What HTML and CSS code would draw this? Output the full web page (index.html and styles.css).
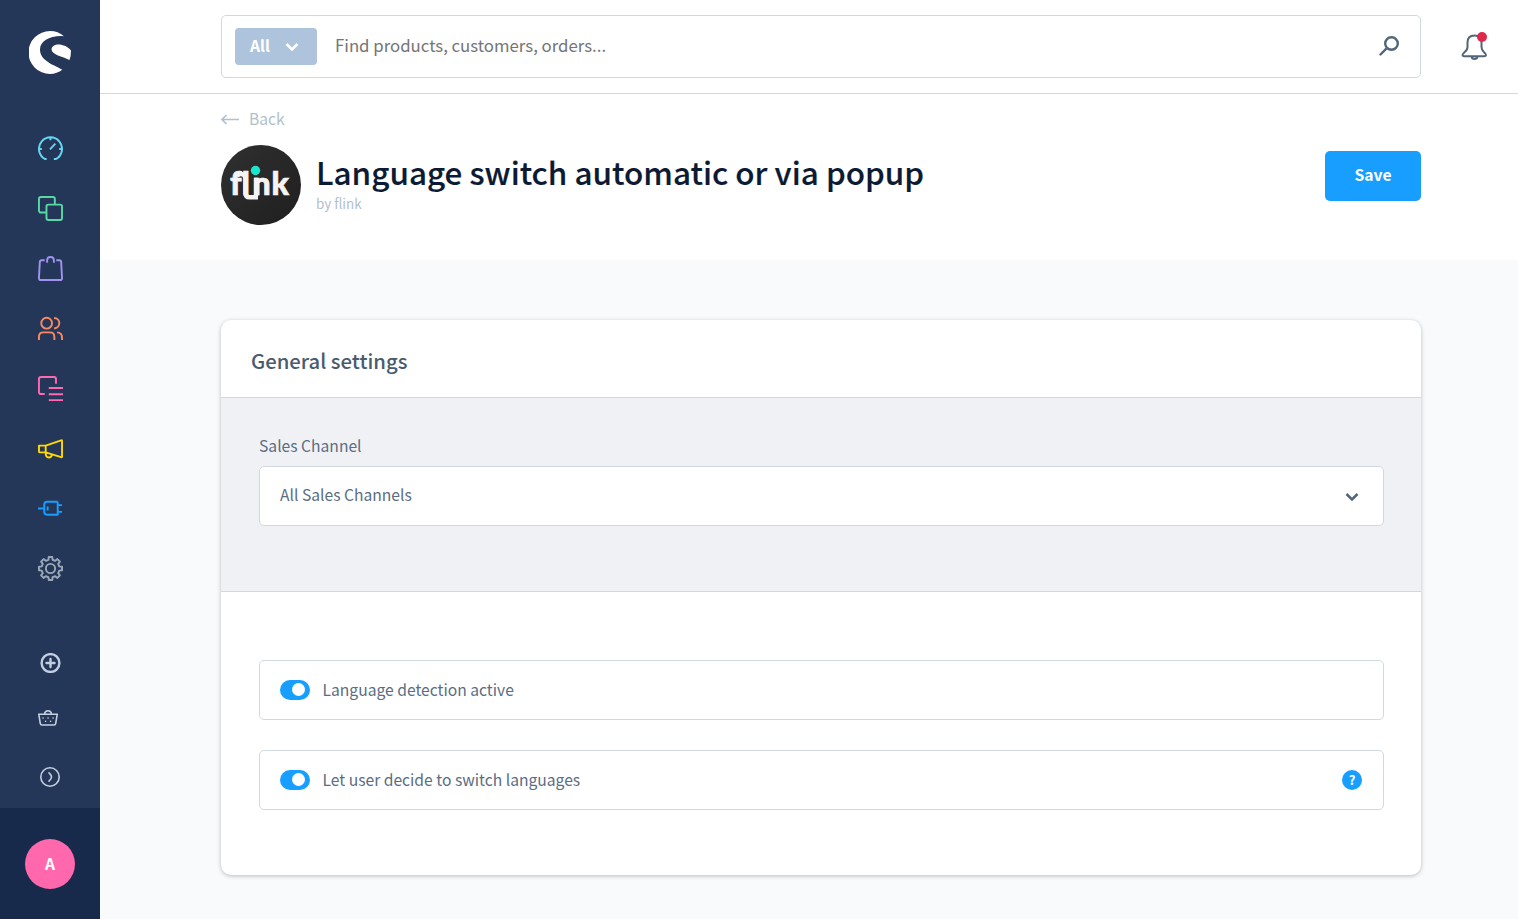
FILE: index.html
```html
<!DOCTYPE html>
<html lang="en">
<head>
  <meta charset="UTF-8">
  <title>Language switch automatic or via popup</title>
  <link rel="stylesheet" href="styles.css">
</head>
<body>

<aside class="sidebar">
  <div class="brand">
    <svg width="42" height="43" viewBox="0 0 42 43"><path fill="#fff" d="M35 5.200C31 1.700 26.500 0 21 0A21.400 21.400 0 0 0 21 43C25.500 43 30 41.500 33.300 38.800C27 34.500 11 30.500 11 18.500C11 10 21 4.300 35 5.200Z"/><path fill="#fff" d="M40.500 29C35 26 23 24 22.500 18.500C23 11 37 12.500 42 19.500Q42 25 40.500 29Z"/></svg>
  </div>
  <nav class="menu">
    <a class="cyan"><svg viewBox="0 0 26 26"><path d="M9 24H7.500A12 12 0 1 1 18.500 24H16.500M13 1.500V4.500M1.500 13.500H4M22 13.500H24.500M12.500 14L18 8"/></svg></a>
    <a class="green"><svg viewBox="0 0 26 26"><rect x="8.800" y="9" width="16.200" height="16" rx="2"/><path d="M8.500 17.200H3A2 2 0 0 1 1 15.200V3A2 2 0 0 1 3 1H15.500A2 2 0 0 1 17.500 3V8.500"/></svg></a>
    <a class="purple"><svg viewBox="0 0 26 26"><path d="M7 4.500H3.800Q2 4.500 1.900 6.300L1 22.800Q.9 25 3 25H23Q25.100 25 25 22.800L24.100 6.300Q24 4.500 22.200 4.500H19M9.500 7V4.500Q9.500 1 13 1T16.500 4.500V7"/></svg></a>
    <a class="orange"><svg viewBox="0 0 26 26"><circle cx="9" cy="7.500" r="5.600"/><path d="M1 25V21.500Q1 17 5.700 17H12.300Q17 17 17 21.500V25M16.700 2C24 2.200 24 12.500 16.700 13M19.800 17Q25 17.200 25 22.500V25"/></svg></a>
    <a class="pink"><svg viewBox="0 0 26 26"><path d="M7 18.800H3.200Q1 18.800 1 16.600V3Q1 1 3.200 1H16.500Q18.700 1 18.700 3V8M11.200 12.500H26M11.200 19H26M11.200 25.300H26"/></svg></a>
    <a class="yellow"><svg viewBox="0 0 26 26"><path d="M1 10H8V17H2Q1 17 1 16ZM8 10L24 4.500Q25 4.300 25 5.200V21.500Q25 22.400 24 22L8 17M8 17Q7.800 22.300 11.300 22.300Q14 22.300 14.500 19.500"/></svg></a>
    <a class="blue"><svg viewBox="0 0 26 26"><path d="M0 13H6.500M20.500 6V19.500H9.500Q6.500 19.500 6.500 16.500V9Q6.500 6 9.500 6H20.500M20.500 9.500H25M20.500 16.500H25M10 11V15"/></svg></a>
    <a class="gray"><svg viewBox="0 0 26 26"><circle cx="13" cy="13" r="4.800"/><path d="M10.800 3.900L11.200 1H14.800L15.200 3.900L17.900 5L20.200 3.200L22.800 5.800L21 8.100L22.100 10.800L25 11.200V14.800L22.100 15.200L21 17.900L22.800 20.200L20.200 22.800L17.900 21L15.200 22.100L14.800 25H11.200L10.800 22.100L8.100 21L5.800 22.800L3.200 20.200L5 17.900L3.900 15.200L1 14.800V11.200L3.900 10.800L5 8.100L3.200 5.800L5.800 3.200L8.100 5Z"/></svg></a>
  </nav>
  <div class="actions">
    <svg width="21" height="20" viewBox="0 0 21 20"><circle cx="10.500" cy="10" r="8.900" stroke-width="2.400"/><path stroke-width="2.400" d="M10.500 6V14M6.500 10H14.500"/></svg>
    <svg class="basket" width="20" height="17" viewBox="0 0 20 17"><path d="M.8 4.300H19.200L17.700 13.500Q17.500 15 16 15H4Q2.500 15 2.300 13.500ZM6.500 4Q7 .8 10 .8T13.500 4"/><path d="M5 8H5.100M10 8H10.100M15 8H15.100M7.500 11.300H7.600M12.500 11.300H12.600"/></svg>
    <svg width="20" height="20" viewBox="0 0 20 20"><circle cx="10" cy="10" r="9.200"/><path d="M9 5.800Q11.500 8 11.500 10T9 14.200"/></svg>
  </div>
  <div class="user"><span class="avatar">A</span></div>
</aside>

<div class="page">
  <header class="topbar">
    <div class="search">
      <button class="search-type"><span>All</span>
        <svg width="14" height="9" viewBox="0 0 14 9"><path d="M1.500 2L7 7.500L12.500 2"/></svg>
      </button>
      <span class="search-text">Find products, customers, orders...</span>
      <svg class="loupe" width="20" height="20" viewBox="0 0 20 20"><circle cx="12.500" cy="7.500" r="6.300"/><path d="M7.800 12.200L1.500 18.500"/></svg>
    </div>
    <div class="bell">
      <svg width="26" height="26" viewBox="0 0 26 26"><path d="M13.500 1.500Q6.500 1.500 6.500 8.500V13Q6.500 16 3.500 18.300Q1 20.500 1.700 21.500Q2.100 22.300 3.500 22.300H22.500Q24.400 22.300 24.800 21.500Q25.500 20.500 23 18.300Q20.500 16 20.500 13V8.500Q20.500 1.500 13.500 1.500ZM10.500 22.500Q11 25 13.500 25T16.500 22.500"/></svg>
      <span class="bell-dot"></span>
    </div>
  </header>

  <section class="head">
    <a class="back">
      <svg width="19" height="11" viewBox="0 0 19 11"><path d="M18 5.500H1M5.500 1L1 5.500L5.500 10"/></svg>
      <span>Back</span>
    </a>
    <div class="head-row">
      <div class="logo">
        <svg width="80" height="80" viewBox="0 0 80 80">
          <text class="logo-text" y="49.500" x="9 20.800 31.500 31.500 50.500">flınk</text>
          <path d="M16 31.500Q17 29 20 29T24.500 32.500V48Q24.500 52.300 28.500 52.300H37" stroke="#f4f4f4" stroke-width="4.500"/>
          <circle cx="34.500" cy="25.500" r="4.700" fill="#19e6cc"/>
        </svg>
      </div>
      <div class="titles">
        <h1>Language switch automatic or via popup</h1>
        <p>by flink</p>
      </div>
      <button class="save">Save</button>
    </div>
  </section>

  <main class="content">
    <div class="card">
      <h2>General settings</h2>
      <div class="channel">
        <label>Sales Channel</label>
        <div class="select">
          <span>All Sales Channels</span>
          <svg width="14" height="9" viewBox="0 0 14 9"><path d="M1.500 2L7 7.500L12.500 2"/></svg>
        </div>
      </div>
      <div class="options">
        <div class="option"><span class="switch"></span><span>Language detection active</span></div>
        <div class="option"><span class="switch"></span><span>Let user decide to switch languages</span><span class="help">?</span></div>
      </div>
    </div>
  </main>
</div>

</body>
</html>
```
FILE: styles.css
```css
* { box-sizing: border-box; }
body { margin: 0; display: flex; height: 919px; overflow: hidden; background: #f9fafc; color: #5a6d82; font: 15.65px/22px "Noto Sans CJK SC", "Noto Sans", sans-serif; }
h1, h2, p { margin: 0; }
button { border: 0; font: inherit; color: #fff; }
svg { display: block; flex: none; fill: none; }

/* sidebar */
.sidebar { width: 100px; height: 919px; background: #243758; display: flex; flex-direction: column; }
.brand { height: 119px; padding: 31px 0 0 29px; }
.menu { display: flex; flex-direction: column; }
.menu a { height: 60px; padding: 17px 0 0 38px; stroke: currentColor; }
.menu svg { width: 25px; height: 25px; stroke-width: 2; stroke-linejoin: round; }
.cyan { color: #65d5f0; }
.green { color: #57d9a3; }
.purple { color: #a092f0; }
.orange { color: #f88962; }
.pink { color: #ff68b4; }
.yellow { color: #ffd700; }
.blue { color: #189eff; }
.gray { color: #9aa8b5; }
.actions { display: flex; flex-direction: column; align-items: center; margin-top: auto; height: 155px; stroke: #c2cfe0; stroke-width: 1.6; stroke-linecap: round; }
.actions .basket { margin: 37px 4px 40px 0; }
.user { height: 111px; background: #172a4b; display: flex; justify-content: center; padding-top: 31px; }
.avatar { width: 50px; height: 50px; border-radius: 50%; background: #ff68ac; color: #fff; font-weight: 700; line-height: 49px; text-align: center; }

.page { flex: 1; display: flex; flex-direction: column; }

/* top bar */
.topbar { height: 94px; background: #fff; border-bottom: 1px solid #d1d9e0; padding: 15px 31px 0 121px; display: flex; justify-content: space-between; }
.search { width: 1200px; height: 63px; border: 1px solid #d1d9e0; border-radius: 5px; display: flex; align-items: center; padding: 0 21px 0 13px; }
.search-type { width: 82px; height: 37px; border-radius: 4px; background: #aec4dc; font-weight: 700; display: flex; align-items: center; justify-content: space-between; padding: 0 18px 0 15px; stroke: #fff; stroke-width: 2.5; }
.search-type span { padding-bottom: 1px; }
.search-text { margin-left: 18px; padding-bottom: 3px; font-size: 16.8px; color: #757575; }
.loupe { margin: 0 0 2px auto; stroke: #52667a; stroke-width: 2.4; stroke-linecap: round; }
.bell { position: relative; width: 26px; height: 26px; margin-top: 19px; stroke: #52667a; stroke-width: 2; }
.bell-dot { position: absolute; right: 0; top: -2px; width: 10px; height: 10px; border-radius: 50%; background: #de294c; }

/* page head */
.head { height: 166px; background: #fff; padding: 14px 97px 0 121px; }
.back { display: flex; align-items: center; gap: 9px; height: 22px; color: #b3bfcc; stroke: #b3bfcc; stroke-width: 1.6; }
.head-row { display: flex; margin-top: 15px; }
.logo { width: 80px; height: 80px; border-radius: 50%; background: linear-gradient(135deg, #303030, #1f1f1f); }
.logo-text { font: 900 32px Lato, sans-serif; font-variant-ligatures: none; fill: #f4f4f4; stroke: #f4f4f4; stroke-width: .7; }
.titles { margin-left: 15px; }
h1 { font-size: 31.45px; font-weight: 500; line-height: 40px; margin-top: 7px; color: #0c1b33; white-space: nowrap; -webkit-text-stroke: .15px #0c1b33; }
.titles p { margin-top: 1px; font-size: 13.4px; line-height: 20px; color: #b3bfcc; }
.save { width: 96px; height: 50px; margin: 6px 0 0 auto; padding: 0 0 2px; border-radius: 5px; background: #189eff; font-weight: 700; }

/* settings card */
.content { padding: 60px 97px 0 121px; }
.card { height: 555px; background: #fff; border-radius: 10px; overflow: hidden; box-shadow: 0 1px 4px rgba(0,0,0,.25); }
h2 { height: 77px; padding-left: 30px; font-size: 20.3px; font-weight: 500; line-height: 80px; color: #4a5b6e; }
.channel { height: 195px; background: #f0f1f5; border: solid #d1d9e0; border-width: 1px 0; padding: 37px 37px 0 38px; }
.channel label { display: block; }
.select, .option { height: 60px; background: #fff; border: 1px solid #d1d9e0; border-radius: 5px; display: flex; align-items: center; padding: 0 21px 0 20px; }
.select { margin-top: 9px; justify-content: space-between; padding-right: 24px; stroke: #52667a; stroke-width: 2.5; }
.select span { padding-bottom: 3px; }
.options { padding: 68px 37px 0 38px; display: flex; flex-direction: column; gap: 30px; }
.switch { width: 30px; height: 20px; margin-right: 12.5px; border-radius: 10px; background: #189eff; padding: 3px 5px 0 12px; }
.switch::before { content: ""; display: block; width: 13px; height: 13px; border-radius: 50%; background: #fff; }
.help { width: 20px; height: 20px; margin-left: auto; border-radius: 50%; background: #189eff; color: #fff; font-size: 13px; font-weight: 700; line-height: 19px; text-align: center; }
```
